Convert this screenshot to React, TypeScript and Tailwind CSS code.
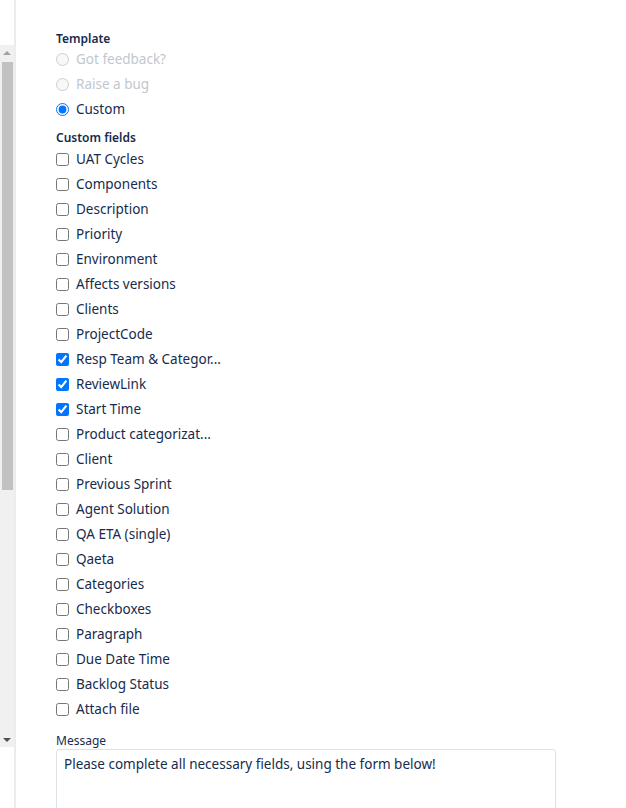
import { useState } from 'react'

const fields = [
  { name: 'UAT Cycles', checked: false },
  { name: 'Components', checked: false },
  { name: 'Description', checked: false },
  { name: 'Priority', checked: false },
  { name: 'Environment', checked: false },
  { name: 'Affects versions', checked: false },
  { name: 'Clients', checked: false },
  { name: 'ProjectCode', checked: false },
  { name: 'Resp Team & Categor...', checked: true },
  { name: 'ReviewLink', checked: true },
  { name: 'Start Time', checked: true },
  { name: 'Product categorizat...', checked: false },
  { name: 'Client', checked: false },
  { name: 'Previous Sprint', checked: false },
  { name: 'Agent Solution', checked: false },
  { name: 'QA ETA (single)', checked: false },
  { name: 'Qaeta', checked: false },
  { name: 'Categories', checked: false },
  { name: 'Checkboxes', checked: false },
  { name: 'Paragraph', checked: false },
  { name: 'Due Date Time', checked: false },
  { name: 'Backlog Status', checked: false },
  { name: 'Attach file', checked: false },
]

export default function App() {
  const [checked, setChecked] = useState(fields.map(f => f.checked))

  return (
    <div
      className="flex h-[808px] w-[626px] overflow-hidden bg-white text-[#172b4d]"
      style={{ fontFamily: '"Noto Sans", "Open Sans", sans-serif' }}
    >
      {/* Scroll strip */}
      <div className="flex w-[16px] shrink-0 flex-col border-r-2 border-[#ececec]">
        <div className="h-[45px]" />
        <div className="flex h-[702px] flex-col items-center bg-[#f0f0f0]">
          <div className="mt-[6px] h-0 w-0 border-x-[4px] border-b-[4px] border-x-transparent border-b-[#a3a3a3]" />
          <div className="mt-[7px] h-[428px] w-[11px] bg-[#c1c1c1]" />
          <div className="flex-1" />
          <div className="mb-[5px] h-0 w-0 border-x-[4px] border-t-[4px] border-x-transparent border-t-[#505050]" />
        </div>
      </div>

      {/* Form */}
      <div className="flex-1 pl-[40px] pt-[31px]">
        <div className="h-[16px] text-[12px] font-semibold leading-[16px]">Template</div>
        <div className="flex flex-col">
          {['Got feedback?', 'Raise a bug', 'Custom'].map((label, i) => (
            <label key={label} className="flex h-[25px] items-center gap-[7px] text-[13.5px]">
              <input
                type="radio"
                name="template"
                disabled={i < 2}
                defaultChecked={i === 2}
                className="m-0 h-[13px] w-[13px] accent-[#0075ff]"
              />
              <span className={i < 2 ? 'text-[#c1c7d0]' : 'text-[#172b4d]'}>{label}</span>
            </label>
          ))}
        </div>

        <div className="mt-[8px] h-[16px] text-[12px] font-semibold leading-[16px]">Custom fields</div>
        <div className="mt-[1px] flex flex-col">
          {fields.map((f, i) => (
            <label key={f.name} className="flex h-[25px] items-center gap-[7px] text-[13.5px]">
              <input
                type="checkbox"
                checked={checked[i]}
                onChange={() => setChecked(checked.map((c, j) => (j === i ? !c : c)))}
                className="m-0 h-[13px] w-[13px] accent-[#0075ff]"
              />
              <span>{f.name}</span>
            </label>
          ))}
        </div>

        <div className="mt-[11px] h-[16px] text-[12px] leading-[16px]">Message</div>
        <textarea
          className="block h-[100px] w-[500px] resize-none rounded-[3px] border border-[#dfe1e6] px-[7px] py-[4px] text-[13.5px] leading-[20px] text-[#172b4d] outline-none"
          defaultValue="Please complete all necessary fields, using the form below!"
        />
      </div>
    </div>
  )
}
